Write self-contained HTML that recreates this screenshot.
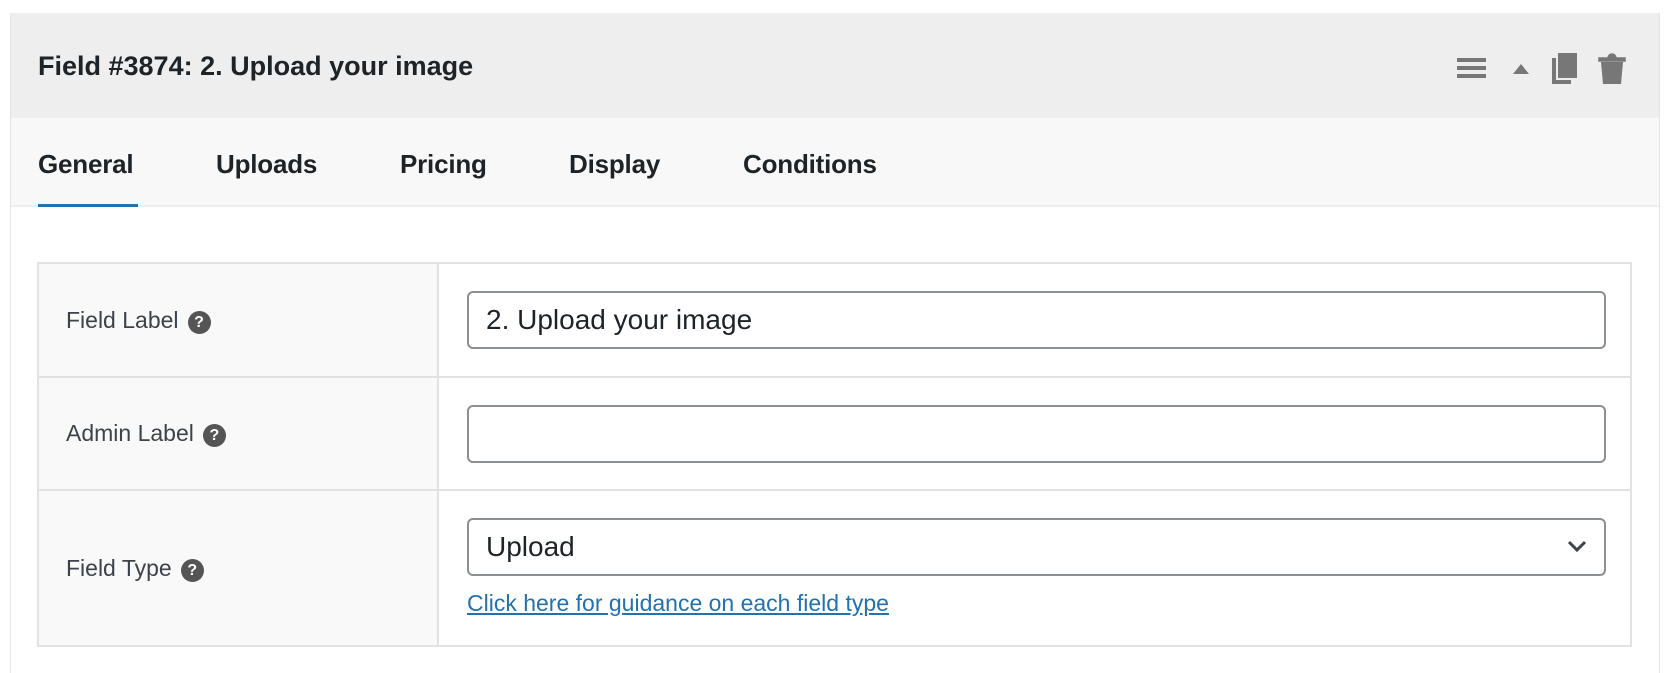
<!DOCTYPE html>
<html><head><meta charset="utf-8"><style>
*{box-sizing:border-box;margin:0;padding:0}
body{width:1676px;height:666px;background:#fff;font-family:"Liberation Sans",Arial,sans-serif;position:relative;overflow:hidden;color:#1d2327}
.panel{position:absolute;left:10px;top:13px;width:1650px;height:660px;border-left:1px solid #e4e4e4;border-right:1px solid #e4e4e4;background:#fff}
.hdr{position:absolute;left:0;top:0;right:0;height:105px;background:#eeeeee}
.title{position:absolute;left:27px;top:38px;font-size:27px;font-weight:bold;letter-spacing:0}
.tabs{position:absolute;left:0;right:0;top:105px;height:89px;background:#f8f8f8;border-bottom:2px solid #ededed}
.tab{position:absolute;top:31px;font-size:26px;font-weight:bold;letter-spacing:-0.2px}
.ul{position:absolute;left:27px;top:86px;width:100px;height:3px;background:#2271b1}
table{position:absolute;left:37px;top:262px;width:1595px;border-collapse:collapse}
td{border:2px solid #e2e2e2;vertical-align:middle}
td.l{width:400px;background:#f9f9f9;padding-left:27px;font-size:23px;color:#3c434a}
td.r{background:#fff;padding-left:28px}
.q{display:inline-block;width:23px;height:23px;border-radius:50%;background:#555;color:#fff;font-size:16px;font-weight:bold;text-align:center;line-height:23px;vertical-align:1px;margin-left:9px}
.inp{width:1139px;height:58px;border:2px solid #8c8f94;border-radius:6px;font-size:28px;padding-left:17px;line-height:54px;position:relative}
a{color:#2271b1;font-size:23px;display:inline-block;margin-top:14px;text-decoration:underline}
</style></head><body>
<div class="panel">
<div class="hdr">
<div class="title">Field #3874: 2. Upload your image</div>
<svg style="position:absolute;left:1440px;top:39px" width="180" height="40" viewBox="1450 52 180 40">
<rect x="1456" y="58" width="29" height="4" fill="#777"/><rect x="1456" y="66" width="29" height="4" fill="#777"/><rect x="1456" y="74" width="29" height="4" fill="#777"/>
<path d="M1512 74 L1520 64 L1528 74Z" fill="#777"/>
<rect x="1551" y="58" width="19" height="26" fill="#777"/><rect x="1556" y="52" width="21" height="27" fill="#777" stroke="#eee" stroke-width="2"/>
<path d="M1598 58 h26 v3 h-26z M1607 58 a4 4 0 0 1 8 0" fill="#777" stroke="#777" stroke-width="1.5"/>
<path d="M1600 62 h22 l-2 22 h-18z" fill="#777"/>
</svg>
</div>
<div class="tabs">
<div class="tab" style="left:27px">General</div>
<div class="tab" style="left:205px">Uploads</div>
<div class="tab" style="left:389px">Pricing</div>
<div class="tab" style="left:558px">Display</div>
<div class="tab" style="left:732px">Conditions</div>
<div class="ul"></div>
</div>
</div>
<table>
<tr style="height:114px"><td class="l">Field Label<span class="q">?</span></td><td class="r"><div class="inp">2. Upload your image</div></td></tr>
<tr style="height:113px"><td class="l">Admin Label<span class="q">?</span></td><td class="r"><div class="inp"></div></td></tr>
<tr style="height:156px"><td class="l">Field Type<span class="q">?</span></td><td class="r" style="padding-top:8px;padding-bottom:10px"><div class="inp">Upload<svg style="position:absolute;right:17px;top:19px" width="20" height="14" viewBox="0 0 20 14"><path d="M2 3 L10 11 L18 3" fill="none" stroke="#3c434a" stroke-width="3"/></svg></div><a>Click here for guidance on each field type</a></td></tr>
</table>
</body></html>
